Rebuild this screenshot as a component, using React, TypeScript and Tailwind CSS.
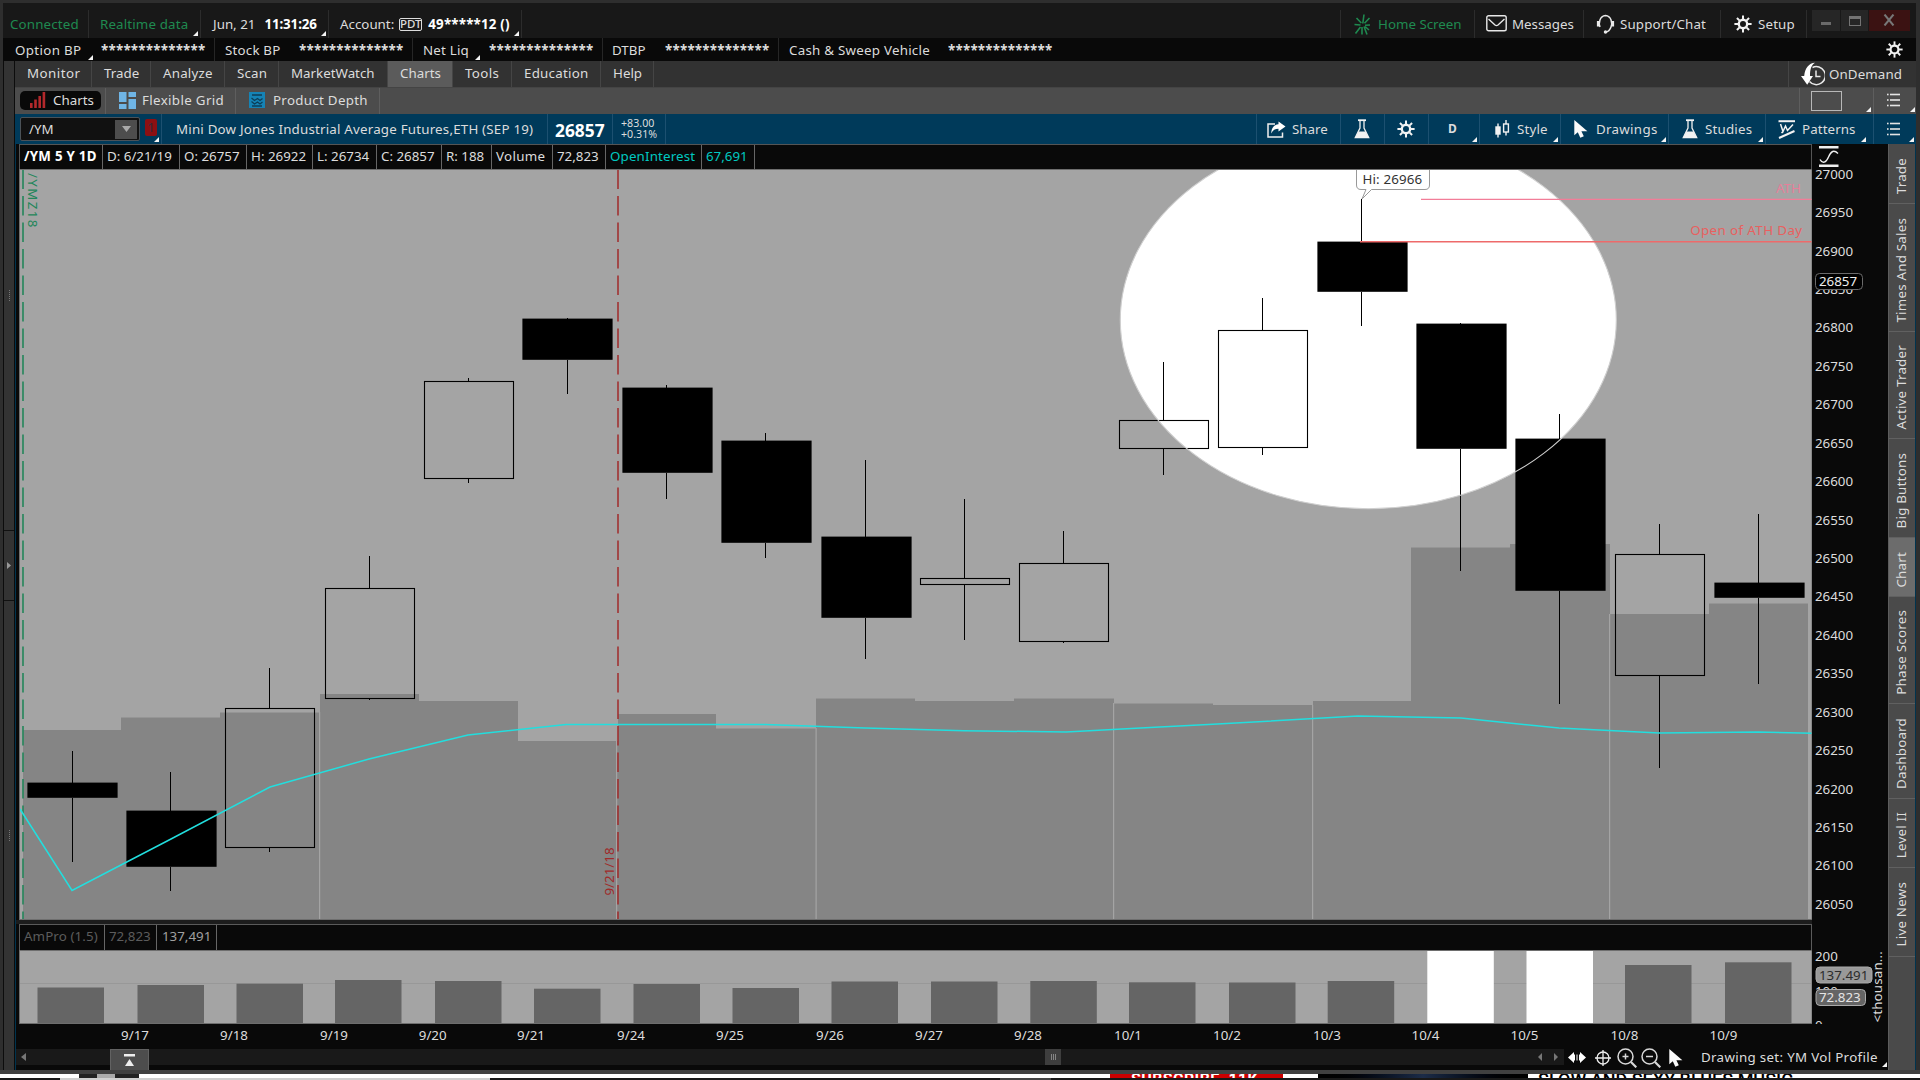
import React from 'react';

type CellProps = { className: string; children?: React.ReactNode; corner?: boolean };

/* Small white triangle in the lower right corner of a drop-down cell */
function Corner({ className = 'right-[2px] bottom-[2px]' }: { className?: string }) {
  return (
    <svg className={`absolute ${className}`} width="5" height="5" viewBox="0 0 5 5">
      <path d="M5 0V5H0Z" fill="#f4f4f4" />
    </svg>
  );
}

function Cell({ className, children, corner }: CellProps) {
  return (
    <div className={`relative flex shrink-0 items-center whitespace-pre ${className}`}>
      {children}
      {corner && <Corner />}
    </div>
  );
}

function Gear({ size = 17 }: { size?: number }) {
  return (
    <svg width={size} height={size} viewBox="0 0 18 18" fill="none" stroke="#f2f2f2">
      <circle cx="9" cy="9" r="4.2" strokeWidth="2.4" />
      {[0, 45, 90, 135, 180, 225, 270, 315].map((a) => (
        <path key={a} d="M9 4.2V0.4" strokeWidth="2" transform={`rotate(${a} 9 9)`} />
      ))}
    </svg>
  );
}

function Flask() {
  return (
    <svg width="16" height="20" viewBox="0 0 16 20">
      <path d="M4 1.2H12" stroke="#f2f2f2" strokeWidth="1.8" />
      <path d="M6 2V9L1.3 18.5H14.7L10 9V2" fill="none" stroke="#f2f2f2" strokeWidth="1.3" />
      <path d="M4.6 12.5H11.4L15 19H1Z" fill="#f2f2f2" />
    </svg>
  );
}

function Pointer({ className = '' }: { className?: string }) {
  return (
    <svg className={className} width="14" height="18" viewBox="0 0 14 18">
      <path d="M0.3 0V15.2L3.8 12.2L6.3 17.8L9.8 16.3L7.4 11.2H13.4Z" fill="#fafafa" />
    </svg>
  );
}

function ListIcon() {
  return (
    <svg width="13" height="14" viewBox="0 0 13 14">
      {[1.5, 7, 12.5].map((y) => (
        <g key={y} fill="#e4e4e4">
          <rect x="0" y={y - 0.8} width="1.6" height="1.6" />
          <rect x="3" y={y - 0.8} width="10" height="1.6" />
        </g>
      ))}
    </svg>
  );
}

const STARS = '**************';
function Stars({ className }: { className: string }) {
  return <span className={`absolute font-bold tracking-[0.24px] ${className}`}>{STARS}</span>;
}

function StatusBar() {
  return (
    <div className="flex h-[35px] bg-[#181818] pl-px">
      <div className="flex pt-[7px]">
        <Cell className="h-7 w-[85px] border-r border-[#2c2c2c] pl-[6px] tracking-[0.15px] text-[#1f8a50]">Connected</Cell>
        <Cell corner className="h-7 w-[112px] border-r border-[#2c2c2c] pl-[11px] tracking-[0.15px] text-[#1f8a50]">Realtime data</Cell>
        <Cell corner className="h-7 w-[128px] border-r border-[#2c2c2c] pl-[12px]">
          Jun, 21<b className="ml-[9px] tracking-[-0.1px] text-white">11:31:26</b>
        </Cell>
        <Cell corner className="h-7 w-[193px] border-r border-[#2c2c2c] pl-[11px]">
          Account:
          <span className="ml-[5px] flex h-[13px] w-[23px] items-center justify-center rounded-[2px] border border-[#ddd] text-[11.5px] leading-none font-medium">PDT</span>
          <b className="ml-[6px] tracking-[0.2px] text-white">49*****12 ()</b>
        </Cell>
      </div>
      <div className="ml-auto flex pt-[7px]">
        <Cell className="h-7 w-[134px] border-l border-[#2c2c2c] pl-[13px] text-[#1f8a50]">
          <svg className="mr-[7px]" width="17" height="21" viewBox="0 0 17 21" fill="none" stroke="#1f8a50" strokeWidth="1.6">
            <path d="M10 0.5L8.8 9.5M13 20.5L10 12.5M8 13V20.5M2.5 4L7.3 9M15.5 4L10.5 9.2M0.5 10.5L6.5 11M16 11L11 11.2M1.5 19.500L6.5 13M15 16L11 12.5" />
          </svg>
          Home Screen
        </Cell>
        <Cell className="h-7 w-[109px] border-l border-[#2c2c2c] pl-[11px]">
          <svg className="mr-[5px] -mt-[2px]" width="21" height="17" viewBox="0 0 21 17" fill="none" stroke="#e8e8e8" strokeWidth="1.4">
            <rect x="0.8" y="0.8" width="19.4" height="15" rx="1.8" />
            <path d="M2.5 4L9 10Q10.5 11.2 12 10L18.5 4" />
          </svg>
          Messages
        </Cell>
        <Cell className="h-7 w-[137px] border-l border-[#2c2c2c] pl-[12px]">
          <svg className="mr-[5px]" width="19" height="20" viewBox="0 0 19 20" fill="none" stroke="#e8e8e8" strokeWidth="1.5">
            <path d="M4 13C2.5 9 3.5 2 9.5 1.5C15.5 2 16.5 9 15 13Q13.5 17.5 9.5 18.2" />
            <path d="M2.2 7V12.5M16.8 7V12.5" strokeWidth="2.6" />
            <circle cx="9.5" cy="18" r="1" fill="#e8e8e8" />
          </svg>
          <span className="tracking-[0.15px]">Support/Chat</span>
        </Cell>
        <Cell className="h-7 w-[87px] border-x border-[#2c2c2c] pl-[13px]">
          <Gear size={18} />
          <span className="ml-[6px] tracking-[0.15px]">Setup</span>
        </Cell>
        <div className="ml-[5px] mr-[6px] flex h-[21px] gap-px">
          <div className="flex w-7 items-center justify-center bg-[#262626]">
            <span className="mt-[5px] h-[3px] w-[10px] bg-[#6a6a6a]" />
          </div>
          <div className="flex w-[27px] items-center justify-center bg-[#262626]">
            <span className="h-[10px] w-[12px] border border-t-[3px] border-[#747474]" />
          </div>
          <div className="flex w-[41px] items-center justify-center bg-[#3b1212]">
            <svg className="-mt-px mr-[2px]" width="12" height="12" viewBox="0 0 12 12" stroke="#777" strokeWidth="2"><path d="M1.5 0.5L10.5 11.5M10.5 0.5L1.5 11.5" /></svg>
          </div>
        </div>
      </div>
    </div>
  );
}

function AccountBar() {
  return (
    <div className="flex h-[23px] bg-[#090909]">
      <Cell className="w-[212px] border-r border-[#262626] pl-[12px]">
        <span className="tracking-[0.35px]">Option BP</span><Stars className="left-[98px]" />
        <Corner className="left-[85px] bottom-px" />
      </Cell>
      <Cell className="w-[198px] border-r border-[#262626] pl-[10px]">
        <span className="tracking-[0.2px]">Stock BP</span><Stars className="left-[84px]" />
      </Cell>
      <Cell className="w-[190px] border-r border-[#262626] pl-[10px]">
        <span className="tracking-[0.2px]">Net Liq</span><Stars className="left-[76px]" />
        <Corner className="left-[62px] bottom-px" />
      </Cell>
      <Cell className="w-[176px] border-r border-[#262626] pl-[9px]">
        DTBP<Stars className="left-[62px]" />
      </Cell>
      <Cell className="w-[300px] pl-[10px]">
        <span className="tracking-[0.25px]">Cash &amp; Sweep Vehicle</span><Stars className="left-[169px]" />
      </Cell>
      <Cell className="ml-auto w-[30px]"><Gear /></Cell>
    </div>
  );
}

const TABS: [string, string][] = [
  ['Monitor', 'w-[77px] tracking-[0.45px]'],
  ['Trade', 'w-[59px]'],
  ['Analyze', 'w-[74px] tracking-[0.2px]'],
  ['Scan', 'w-[54px] tracking-[0.2px]'],
  ['MarketWatch', 'w-[109px]'],
  ['Charts', 'w-[65px] bg-[#5b5b5b]'],
  ['Tools', 'w-[59px] tracking-[0.35px]'],
  ['Education', 'w-[89px] tracking-[0.25px]'],
  ['Help', 'w-[53px]'],
];

function MainTabs() {
  return (
    <div className="flex h-[27px] border-b border-[#444] bg-[#323232]">
      {TABS.map(([label, cls]) => (
        <Cell key={label} className={`border-r border-[#454545] pb-[2px] pl-[12px] ${cls}`}>{label}</Cell>
      ))}
      <Cell className="ml-auto w-[128px] border-l border-[#454545] pb-px pl-[12px]">
        <svg className="mr-[4px]" width="24" height="24" viewBox="0 0 24 24" fill="none" stroke="#e8e8e8" strokeWidth="1.5">
          <path d="M11.500 5.500A9 9 0 1 1 8.500 19.500" />
          <path d="M15 8.500V14.500H19.500" />
          <path d="M14 0.8C8 1 4 6 3.2 14H0L6.2 22.8L12 14H9C9 8 10 3.5 14 0.8Z" fill="#fff" stroke="none" />
        </svg>
        <span className="tracking-[0.1px]">OnDemand</span>
      </Cell>
    </div>
  );
}

function SubTabs() {
  return (
    <div className="flex h-[26px] bg-[#4c4c4c]">
      <Cell className="w-[91px] border-r border-[#5e5e5e] pb-[2px] pl-[5px]">
        <div className="flex h-[19px] w-[81px] items-center rounded-[5px] bg-[#090909] pl-[10px]">
          <svg className="mr-[7px]" width="16" height="16" viewBox="0 0 16 16" fill="#b3282b">
            <rect x="0" y="11" width="2.6" height="5" />
            <rect x="4.2" y="7.5" width="2.6" height="8.5" />
            <rect x="8.4" y="4" width="2.6" height="12" />
            <rect x="12.6" y="0" width="2.6" height="16" />
          </svg>
          Charts
        </div>
      </Cell>
      <Cell className="w-[130px] border-r border-[#5e5e5e] pb-[2px] pl-[13px]">
        <svg className="mr-[6px]" width="17" height="17" viewBox="0 0 17 17" fill="#6fb5e6">
          <rect width="7.5" height="10" /><rect x="9.5" width="7.5" height="5" />
          <rect y="12" width="7.5" height="5" /><rect x="9.5" y="7" width="7.5" height="10" />
        </svg>
        <span className="tracking-[0.35px]">Flexible Grid</span>
      </Cell>
      <Cell className="w-[144px] border-r border-[#5e5e5e] pb-[2px] pl-[13px]">
        <svg className="mr-[8px]" width="16" height="16" viewBox="0 0 16 16">
          <rect width="16" height="16" fill="#1583b5" />
          <path d="M3 3H13M2.5 6L5.5 8.5L8.5 6.5L11 8.5L13.5 6.5M2.5 9.5L5.5 12L8.5 10L11 12L13.5 10M3 14H13" fill="none" stroke="#0c3e58" strokeWidth="1.3" />
        </svg>
        <span className="tracking-[0.3px]">Product Depth</span>
      </Cell>
      <Cell corner className="ml-auto w-[74px] border-l border-[#5e5e5e] pl-[11px]">
        <span className="h-[20px] w-[31px] border border-[#b8b8b8]" />
      </Cell>
      <Cell className="w-[43px] border-l border-[#5e5e5e] pb-[2px] pl-[13px]">
        <ListIcon />
        <Corner className="right-px bottom-[2px]" />
      </Cell>
    </div>
  );
}

function SymbolBar() {
  return (
    <div className="flex h-[30px] bg-[#003a5a]">
      <Cell corner className="w-[147px] border-r border-[#1c5070] pl-[5px]">
        <div className="flex h-[24px] w-[120px] items-center rounded-[2px] border border-[#4b5258] bg-[#111] pl-[8px] pr-[2px]">
          /YM
          <span className="ml-auto flex h-[19px] w-[22px] items-center justify-center bg-[#4d4d4d]">
            <svg width="9" height="6" viewBox="0 0 9 6"><path d="M0 0H9L4.5 6Z" fill="#aaa" /></svg>
          </span>
        </div>
        <span className="-mt-[4px] ml-[5px] flex h-[17px] w-[12px] items-center justify-center rounded-[2px] bg-[#8c1013] text-[#35293a]">1</span>
      </Cell>
      <Cell className="w-[386px] border-r border-[#1c5070] pb-px pl-[14px] tracking-[0.2px]">Mini Dow Jones Industrial Average Futures,ETH (SEP 19)</Cell>
      <Cell className="w-[65px] border-r border-[#1c5070] pt-[2px] pl-[7px] text-[17.33px] font-bold text-white">26857</Cell>
      <Cell className="w-[53px] border-r border-[#1c5070] pl-[8px]">
        <div className="text-[10.67px] leading-[11px]">+83.00<br />+0.31%</div>
      </Cell>
      <div className="ml-auto flex">
        <Cell className="w-[84px] border-l border-[#1c5070] pl-[10px]">
          <svg className="mr-[6px]" width="19" height="17" viewBox="0 0 19 17">
            <path d="M8 3H1V16H15.5V11.5" fill="none" stroke="#eee" strokeWidth="1.5" />
            <path d="M11.5 0.5L18.5 5.5L11.5 10.5V7.7C8 7.7 6 9 4.2 12.5C4.4 7.5 6.5 3.7 11.5 3.3Z" fill="#fff" />
          </svg>
          Share
        </Cell>
        <Cell className="w-[44px] border-l border-[#1c5070] pl-[13px]"><Flask /></Cell>
        <Cell className="w-[44px] border-l border-[#1c5070] pl-[12px]"><Gear size={18} /></Cell>
        <Cell corner className="w-[51px] border-l border-[#1c5070] pl-[19px] text-[12px] font-bold">D</Cell>
        <Cell corner className="w-[81px] border-l border-[#1c5070] pl-[15px]">
          <svg className="mr-[7px]" width="15" height="18" viewBox="0 0 15 18" fill="none" stroke="#f2f2f2" strokeWidth="1.4">
            <path d="M3 3.5V17.5M11 0V4M11 12V15.5" />
            <rect x="1" y="7" width="4" height="7" fill="#f2f2f2" /><rect x="8.6" y="4" width="4.8" height="8" />
          </svg>
          <span className="tracking-[0.15px]">Style</span>
        </Cell>
        <Cell corner className="w-[108px] border-l border-[#1c5070] pl-[13px]">
          <Pointer className="mr-[8px]" /><span className="tracking-[0.3px]">Drawings</span>
        </Cell>
        <Cell corner className="w-[97px] border-l border-[#1c5070] pl-[13px]">
          <Flask /><span className="ml-[7px] tracking-[0.2px]">Studies</span>
        </Cell>
        <Cell className="w-[108px] border-l border-[#1c5070] pl-[12px]">
          <svg className="mr-[6px]" width="18" height="19" viewBox="0 0 18 19" fill="none" stroke="#f2f2f2">
            <path d="M0.5 1.2H17" strokeWidth="2" />
            <path d="M2.5 4L5 11.5L7.5 6L9.5 10.5L15 4.5M5 11.5L3.5 13" strokeWidth="1.5" />
            <path d="M1 18L16.5 11" strokeWidth="2" />
          </svg>
          <span className="tracking-[0.1px]">Patterns</span>
          <Corner className="right-[7px] bottom-[2px]" />
        </Cell>
        <Cell corner className="w-[43px] border-l border-[#1c5070] pl-[13px]"><ListIcon /></Cell>
      </div>
    </div>
  );
}

const INFO: [string, string][] = [
  ['/YM 5 Y 1D', 'w-[83px] font-bold text-white tracking-[0.25px]'],
  ['D: 6/21/19', 'w-[77px]'],
  ['O: 26757', 'w-[67px]'],
  ['H: 26922', 'w-[66px]'],
  ['L: 26734', 'w-[64px]'],
  ['C: 26857', 'w-[65px]'],
  ['R: 188', 'w-[50px]'],
  ['Volume', 'w-[61px] tracking-[0.3px]'],
  ['72,823', 'w-[53px]'],
  ['OpenInterest', 'w-[96px] tracking-[0.15px] text-[#00c8c0]'],
  ['67,691', 'w-[53px] text-[#00c8c0]'],
];

type Candle = [x: number, left: number, right: number, top: number, bottom: number, high: number, low: number, filled: boolean];
const CANDLES: Candle[] = [
  [72, 27, 118, 782, 798, 751, 862, true],
  [170, 126, 217, 810, 867, 772, 891, true],
  [269, 225, 314, 708, 847, 668, 852, false],
  [369, 325, 414, 588, 698, 556, 700, false],
  [468, 424, 513, 381, 478, 378, 483, false],
  [567, 522, 613, 318, 360, 318, 394, true],
  [666, 622, 713, 387, 473, 385, 499, true],
  [765, 721, 812, 440, 543, 433, 558, true],
  [865, 821, 912, 536, 618, 460, 659, true],
  [964, 920, 1009, 578, 584, 499, 640, false],
  [1063, 1019, 1108, 563, 641, 531, 643, false],
  [1163, 1119, 1208, 420, 448, 362, 475, false],
  [1262, 1218, 1307, 330, 447, 298, 455, false],
  [1361, 1317, 1408, 241, 292, 199, 326, true],
  [1460, 1416, 1507, 323, 449, 323, 571, true],
  [1559, 1515, 1606, 438, 591, 414, 704, true],
  [1659, 1615, 1704, 554, 675, 524, 768, false],
  [1758, 1714, 1805, 582, 598, 514, 684, true],
];

const VOLUME: [number, number][] = [
  [23, 730], [121, 717.500], [220, 712.500], [320, 694], [419, 701], [518, 741], [618, 714], [716, 728.5], [816, 698.5],
  [915, 701], [1014, 698.5], [1114, 703.5], [1213, 705], [1313, 701], [1411, 547.5], [1510, 544], [1610, 614], [1709, 603.5], [1808, 0],
];
const WEEKS: [number, number][] = [[319, 712], [616, 741], [815.500, 728], [1113, 703], [1312, 705], [1609, 614]];

const PRICES = Array.from({ length: 20 }, (_, i) => ({ label: String(27000 - i * 50), y: 174 + i * 38.42 }));

function PriceChart() {
  return (
    <svg className="block shrink-0 overflow-visible" width="1872" height="755" viewBox="16 169 1872 755" fontSize="13.33">
      <rect x="16" y="169" width="1872" height="755" fill="#090909" />
      <rect x="16" y="920" width="1796" height="4" fill="#1c1c1c" />
      <clipPath id="plot"><rect x="20" y="170" width="1791.5" height="749" /></clipPath>
      <rect x="19" y="169" width="1793" height="751" fill="#6e6e6e" />
      <g clipPath="url(#plot)">
        <rect x="20" y="170" width="1792" height="750" fill="#a4a4a4" />
        {VOLUME.slice(0, -1).map(([x, y], i) => (
          <rect key={x} x={x} y={y} width={VOLUME[i + 1][0] - x} height={919 - y} fill="#858585" />
        ))}
        {WEEKS.map(([x, y]) => <rect key={x} x={x} y={y} width="1.2" height={919 - y} fill="#a4a4a4" />)}
        <ellipse cx="1368.3" cy="320" rx="248" ry="188.7" fill="#fff" />
        <path d="M23 169.5V919" stroke="#23865a" strokeWidth="1.6" strokeDasharray="19.5 7" />
        <path d="M618 169.5V919" stroke="#a02a2a" strokeWidth="1.5" strokeDasharray="19.5 7" />
        {CANDLES.map(([x, l, r, t, b, h, lo, filled]) => (
          <g key={x} stroke="#000" strokeWidth="1">
            <path d={`M${x + 0.5} ${h}V${t + 1}M${x + 0.5} ${b}V${lo}`} />
            {filled
              ? <rect x={l + 0.4} y={t + 0.6} width={r - l - 0.8} height={b - t - 0.8} fill="#000" stroke="none" />
              : <rect x={l + 0.5} y={t + 0.5} width={r - l} height={b - t} fill="none" strokeWidth="1.1" />}
          </g>
        ))}
        <ellipse cx="1368.3" cy="320" rx="248" ry="188.7" fill="none" stroke="#cfcfcf" strokeWidth="1.1" />
        <path d="M1421 199.3H1812" stroke="#f27d98" strokeWidth="1.3" />
        <path d="M1360 241.7H1812" stroke="#ee6a6a" strokeWidth="1.5" />
        <text x="1776" y="192.5" fill="#e5809a">ATH</text>
        <text x="1802.5" y="234.5" fill="#e8605f" textAnchor="end" letterSpacing="0.4">Open of ATH Day</text>
        <path d="M20 809L72 890.5L171 839L270 787L369 759L468 735L566 724.5H765L865 728L964 730.7L1066 732L1150 727.6L1213 724.3L1358 716L1461 718L1559 728L1659 733L1758 732L1812 733.3" fill="none" stroke="#22dede" strokeWidth="1.5" />
        <path d="M1356.5 165V185Q1356.5 189.5 1361 189.5H1366L1362 199L1371.5 189.5H1425Q1429.5 189.5 1429.5 185V165Z" fill="#fff" stroke="#999" />
        <text x="1362.5" y="184" fill="#333" letterSpacing="0.15">Hi: 26966</text>
        <text transform="translate(28 173) rotate(90)" fill="#23865a" letterSpacing="1.4">/YMZ18</text>
        <text transform="translate(613.5 895.5) rotate(-90)" fill="#a02a2a">9/21/18</text>
      </g>
      <g fill="#ddd">
        {PRICES.map((p) => <text key={p.label} x="1815" y={p.y + 4.8}>{p.label}</text>)}
      </g>
      <rect x="1815.5" y="273.5" width="47" height="16" rx="4" fill="#000" stroke="#6a6a6a" />
      <text x="1819" y="286.3" fill="#eee">26857</text>
    </svg>
  );
}

const BARS: [number, number][] = [
  [37.5, 987.5], [137.5, 985], [236.5, 983.7], [335, 980], [435, 981], [534, 988.7], [633.5, 984], [732.5, 988],
  [831.5, 981.5], [931, 981.5], [1030.3, 981], [1129, 982.3], [1229, 982.5], [1327.7, 981], [1427.3, 951], [1526.5, 951], [1625, 965], [1725, 962.3],
];
const DATES: [string, number][] = [
  ['9/17', 135], ['9/18', 234], ['9/19', 334], ['9/20', 432.7], ['9/21', 531], ['9/24', 631], ['9/25', 730], ['9/26', 830], ['9/27', 929],
  ['9/28', 1028], ['10/1', 1128], ['10/2', 1227], ['10/3', 1327], ['10/4', 1425.5], ['10/5', 1524.5], ['10/8', 1624.5], ['10/9', 1723.5],
];

function VolumeChart() {
  return (
    <svg className="block shrink-0" width="1872" height="99" viewBox="16 950 1872 99" fontSize="13.33">
      <rect x="16" y="950" width="1872" height="99" fill="#090909" />
      <rect x="19" y="950" width="1793" height="74" fill="#6e6e6e" />
      <rect x="20" y="951" width="1791.5" height="72" fill="#a4a4a4" />
      <path d="M20 983.5H1811" stroke="#989898" />
      {BARS.map(([x, y]) => (
        <rect key={x} x={x} y={y} width="66.5" height={1023 - y} fill={y === 951 ? '#fff' : '#656565'} />
      ))}
      <g fill="#ddd">
        {DATES.map(([d, x]) => <text key={d} x={x} y="1040" textAnchor="middle">{d}</text>)}
        <text x="1815" y="961">200</text>
        <text x="1815" y="995.5">100</text>
        <clipPath id="zero"><rect x="1812" y="1000" width="60" height="24" /></clipPath>
        <text x="1815" y="1030" clipPath="url(#zero)">0</text>
        <text transform="translate(1881.5 1022.5) rotate(-90)" letterSpacing="0.15">&lt;thousan...</text>
      </g>
      <rect x="1816" y="967" width="56" height="16" rx="4" fill="#999" stroke="#aaa" />
      <text x="1819" y="979.8" fill="#2c2c2c">137.491</text>
      <rect x="1816" y="989.5" width="49.5" height="16" rx="4" fill="#656565" stroke="#aaa" />
      <text x="1819" y="1002.3" fill="#e4e4e4">72.823</text>
    </svg>
  );
}

function ScrollRow() {
  return (
    <div className="flex h-[21px] bg-[#090909]">
      <div className="flex h-[16px] w-[1548px] items-center bg-[#191919]">
        <svg className="ml-[5px]" width="5" height="8" viewBox="0 0 5 8"><path d="M5 0V8L0 4Z" fill="#777" /></svg>
        <div className="ml-[84px] flex h-[22px] w-[39px] items-center justify-center self-start border border-[#626262] bg-[#4d4d4d]">
          <svg width="11" height="12" viewBox="0 0 11 12" fill="#eee"><rect x="0" y="0" width="11" height="2.5" /><path d="M5.5 5L10 12H1Z" /></svg>
        </div>
        <div className="ml-[896px] flex h-[16px] w-[16px] items-center justify-center gap-px bg-[#3e3e3e]">
          <span className="h-[6px] w-px bg-[#858585]" /><span className="h-[6px] w-px bg-[#858585]" /><span className="h-[6px] w-px bg-[#858585]" />
        </div>
        <svg className="ml-auto" width="4" height="8" viewBox="0 0 4 8"><path d="M4 0V8L0 4Z" fill="#777" /></svg>
        <svg className="mr-[6px] ml-[12px]" width="4" height="8" viewBox="0 0 4 8"><path d="M0 0V8L4 4Z" fill="#777" /></svg>
      </div>
      <div className="relative flex flex-1 items-start">
        <svg className="mt-[3px] ml-[4px]" width="18" height="11" viewBox="0 0 18 11" fill="#fff">
          <path d="M0 5.5L6 0V11ZM18 5.5L12 0V11Z" /><rect x="6" y="2.5" width="1" height="6" /><rect x="8.5" y="2.5" width="1" height="6" /><rect x="11" y="2.5" width="1" height="6" />
        </svg>
        <svg className="mt-[1px] ml-[9px]" width="16" height="16" viewBox="0 0 16 16" fill="none" stroke="#eee" strokeWidth="1.3">
          <circle cx="8" cy="8" r="6" /><path d="M8 0V16M0 8H16" />
        </svg>
        {[true, false].map((plus) => (
          <svg key={String(plus)} className={plus ? '-mt-px ml-[6px]' : '-mt-px ml-[4px]'} width="20" height="20" viewBox="0 0 20 20" fill="none" stroke="#d8d8d8" strokeWidth="1.5">
            <circle cx="8.5" cy="8.5" r="7.5" /><path d="M14 14L19.3 19.3" strokeWidth="2.2" />
            <path d={plus ? 'M8.5 5.5V11.5M5.5 8.5H11.5' : 'M5 8.5H12'} />
          </svg>
        ))}
        <Pointer className="ml-[8px]" />
        <span className="ml-[18px] leading-[17px] tracking-[0.32px] whitespace-pre">Drawing set: YM Vol Profile</span>
        <Corner className="right-px bottom-[3px]" />
      </div>
    </div>
  );
}

const SIDE: [string, string][] = [
  ['Trade', 'h-[60px]'],
  ['Times And Sales', 'h-[128px]'],
  ['Active Trader', 'h-[107px]'],
  ['Big Buttons', 'h-[99px]'],
  ['Chart', 'h-[59px] bg-[#6c6c6c]'],
  ['Phase Scores', 'h-[107px]'],
  ['Dashboard', 'h-[95px]'],
  ['Level II', 'h-[69px]'],
  ['Live News', 'h-[89px]'],
];

function LeftRail() {
  return (
    <div className="flex w-[12px] shrink-0 flex-col border-x border-[#0c0c0c] bg-[#333]">
      <div className="flex h-[470px] items-center justify-center border-b border-[#111]">
        <span className="h-[11px] border-l border-dotted border-[#777]" />
      </div>
      <div className="flex h-[70px] items-center justify-center border-b border-[#111]">
        <svg width="4" height="7" viewBox="0 0 4 7"><path d="M0 0V7L4 3.5Z" fill="#999" /></svg>
      </div>
      <div className="flex flex-1 items-center justify-center">
        <span className="h-[11px] border-l border-dotted border-[#777]" />
      </div>
    </div>
  );
}

export default function App() {
  return (
    <div className="flex h-[1080px] w-[1920px] flex-col overflow-hidden bg-[#2e2e2e] font-['Noto_Sans',sans-serif] text-[13.33px] leading-[18px] text-[#dcdcdc]">
      <div className="flex h-[1070px] shrink-0 flex-col pt-[3px] pr-[4px] pl-[3px]">
        <StatusBar />
        <AccountBar />
        <div className="flex min-h-0 flex-1 bg-[#090909]">
          <LeftRail />
          <div className="flex flex-1 flex-col">
            <MainTabs />
            <SubTabs />
            <SymbolBar />
            <div className="flex flex-1 border-x border-[#00344f] bg-[#090909]">
              <div className="flex w-[1872px] flex-col">
                <div className="flex h-[25px]">
                  <div className="ml-[3px] flex w-[1793px] border border-b-0 border-[#555]">
                    {INFO.map(([label, cls]) => (
                      <Cell key={label} className={`border-r border-[#666] pb-[3px] pl-[4px] ${cls}`}>{label}</Cell>
                    ))}
                  </div>
                  <svg className="mt-[2px] ml-[7px]" width="20" height="21" viewBox="0 0 20 21" fill="none" stroke="#eee">
                    <path d="M0 1.3H19.5M0 19.7H19.5" strokeWidth="2.4" />
                    <path d="M1 13.5C3.5 18 7 17 9.5 11S15 3.5 19 7.500" strokeWidth="1.4" />
                  </svg>
                </div>
                <PriceChart />
                <div className="ml-[3px] flex h-[26px] w-[1793px] border border-b-0 border-[#5a5a5a]">
                  <Cell className="w-[85px] border-r border-[#666] pb-[4px] pl-[4px] tracking-[0.1px] text-[#5c5c5c]">AmPro (1.5)</Cell>
                  <Cell className="w-[52px] border-r border-[#666] pb-[4px] pl-[4px] text-[#5c5c5c]">72,823</Cell>
                  <Cell className="w-[60px] border-r border-[#666] pb-[4px] pl-[5px] text-[#a0a0a0]">137,491</Cell>
                </div>
                <VolumeChart />
                <ScrollRow />
              </div>
              <div className="flex flex-1 flex-col border-l border-[#5c5c5c] bg-[#4a4a4a]">
                {SIDE.map(([label, cls]) => (
                  <div key={label} className={`flex items-center justify-center border-b border-[#606060] pt-[5px] pr-[2px] ${cls}`}>
                    <span className="rotate-180 tracking-[0.22px] whitespace-pre [writing-mode:vertical-rl]">{label}</span>
                  </div>
                ))}
              </div>
            </div>
          </div>
        </div>
      </div>
      <div className="h-[4px] shrink-0 bg-[#404040]" />
      <div className="flex h-[4px] shrink-0 bg-white">
        <div className="ml-[79px] flex h-[4px] w-[60px] bg-[#222]"><span className="ml-[18px] w-[18px] bg-[#aaa]" /></div>
        <div className="ml-[971px] h-[4px] w-[173px] overflow-hidden bg-[#cc0000] pl-[21px] font-['Roboto'] text-[16px] leading-[12px] font-bold tracking-[0.4px] whitespace-pre text-white">SUBSCRIBE  11K</div>
        <div className="ml-[35px] h-[4px] w-[210px] bg-gradient-to-r from-black via-[#1c2c48] to-black" />
        <div className="h-[4px] flex-1 overflow-hidden pl-[10px] font-['Roboto'] text-[18px] leading-[12px] font-medium whitespace-pre text-black">SLOW AND SEXY BLUES MUSIC</div>
      </div>
      <div className="flex h-[2px] shrink-0 bg-[#181818]">
        <div className="ml-[60px] w-[430px] bg-[#cfcfcf]" />
        <div className="ml-[510px] w-[51px] bg-[#444]" />
      </div>
    </div>
  );
}
